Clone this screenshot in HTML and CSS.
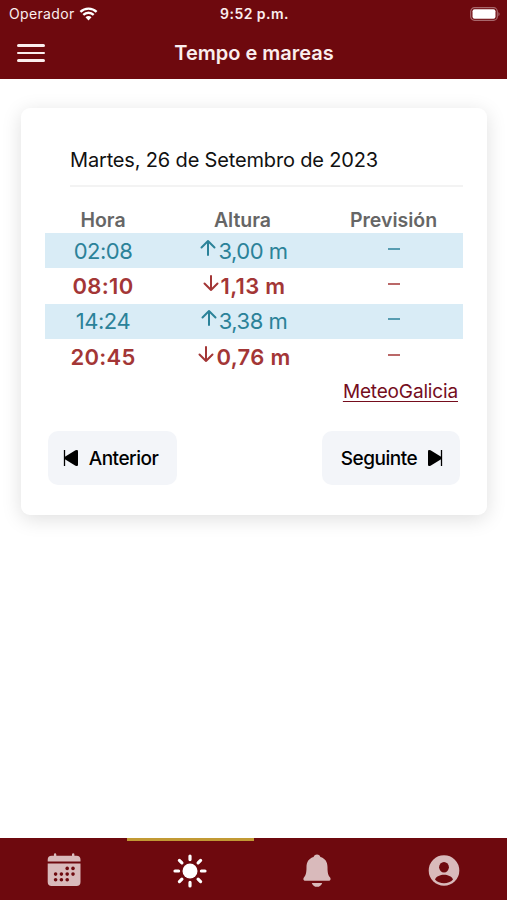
FILE: index.html
```html
<!DOCTYPE html>
<html lang="gl">

<head>
    <meta charset="UTF-8">
    <meta name="viewport" content="width=device-width, initial-scale=1.0">
    <title>Tempo e mareas</title>
    <link rel="stylesheet" href="styles.css">
</head>

<body>
    <header class="header">
        <div class="status">
            <div class="carrier">
                <span>Operador</span>
                <svg width="19" height="14" viewBox="0 0 18 14" fill="none" stroke="#fff" stroke-width="2.3">
                    <path d="M.9 4.9C5.4.4 12.6.4 17.1 4.9" />
                    <path d="M3.8 7.9C6.7 5 11.3 5 14.2 7.9" />
                    <path d="M6 10.2C7.7 8.6 10.3 8.6 12 10.2L9 13.4Z" fill="#fff" stroke="none" />
                </svg>
            </div>
            <span class="time">9:52 p.m.</span>
            <svg class="battery" width="30" height="14" viewBox="0 0 30 14">
                <rect x=".7" y=".7" width="26.6" height="12.6" rx="3.8" fill="none" stroke="#a8686c" stroke-width="1.2" />
                <rect x="2.5" y="2.3" width="23" height="9.4" rx="2" fill="#fff" />
                <path d="M28.4 5v4.200c1.600-.8 1.600-3.400 0-4.200z" fill="#a8686c" />
            </svg>
        </div>
        <div class="navbar">
            <div class="menu">
                <span></span>
                <span></span>
                <span></span>
            </div>
            <h1>Tempo e mareas</h1>
        </div>
    </header>

    <main>
        <div class="card">
            <h2>Martes, 26 de Setembro de 2023</h2>
            <!-- Tides -->
            <table>
                <thead>
                    <tr>
                        <th class="hour">Hora</th>
                        <th class="height">Altura</th>
                        <th>Previsión</th>
                    </tr>
                </thead>
                <tbody>
                    <tr class="high">
                        <td>02:08</td>
                        <td class="level"><svg class="arrow" viewBox="0 0 16 18"><path d="M8 16V2M1.500 8.500L8 2l6.500 6.500" /></svg>3,00 m</td>
                        <td><span class="dash"></span></td>
                    </tr>
                    <tr class="low">
                        <td>08:10</td>
                        <td class="level"><svg class="arrow" viewBox="0 0 16 18"><path d="M8 2v14M1.500 9.500L8 16l6.500-6.500" /></svg>1,13 m</td>
                        <td><span class="dash"></span></td>
                    </tr>
                    <tr class="high">
                        <td>14:24</td>
                        <td class="level"><svg class="arrow" viewBox="0 0 16 18"><path d="M8 16V2M1.500 8.500L8 2l6.500 6.500" /></svg>3,38 m</td>
                        <td><span class="dash"></span></td>
                    </tr>
                    <tr class="low">
                        <td>20:45</td>
                        <td class="level"><svg class="arrow wide" viewBox="0 0 16 18"><path d="M8 2v14M1.500 9.500L8 16l6.500-6.500" /></svg>0,76 m</td>
                        <td><span class="dash"></span></td>
                    </tr>
                </tbody>
            </table>
            <a class="source" href="#">MeteoGalicia</a>
            <div class="buttons">
                <button class="prev">
                    <svg width="16" height="18" viewBox="0 0 16 18"><path d="M1.500 1v16" stroke="#000" stroke-width="1.300" /><path d="M1.500 8L12.500 1.300q2.500-1 2.500 1v13.400q0 2-2.500 1L1.500 10z" /></svg>
                    <span>Anterior</span>
                </button>
                <button class="next">
                    <span>Seguinte</span>
                    <svg width="16" height="18" viewBox="0 0 16 18"><path d="M14.500 1v16" stroke="#000" stroke-width="1.300" /><path d="M14.500 8L3.500 1.300Q1 .3 1 2.300v13.400q0 2 2.500 1l11-6.700z" /></svg>
                </button>
            </div>
        </div>
    </main>

    <nav class="tabs">
        <a class="tab calendar" href="#">
            <svg width="34" height="34" viewBox="0 0 34 34">
                <path d="M.7 8.500V6.700Q.7 2.700 4.700 2.700H6.900V1.400a1.200 1.200 0 0 1 2.400 0v1.300H25V1.400a1.200 1.200 0 0 1 2.400 0v1.300h2.100q4 0 4 4v1.800zM.7 10.600h32.800v18.500q0 4-4 4H4.700q-4 0-4-4z" />
                <g fill="#6e090e">
                    <circle cx="20.200" cy="15.400" r="1.800" /><circle cx="26" cy="15.400" r="1.800" />
                    <circle cx="8.600" cy="21.100" r="1.800" /><circle cx="14.400" cy="21.100" r="1.800" /><circle cx="20.200" cy="21.100" r="1.800" /><circle cx="26" cy="21.100" r="1.800" />
                    <circle cx="8.600" cy="26.800" r="1.800" /><circle cx="14.400" cy="26.800" r="1.800" /><circle cx="20.200" cy="26.800" r="1.800" />
                </g>
            </svg>
        </a>
        <a class="tab active" href="#">
            <svg width="34" height="34" viewBox="0 0 34 34">
                <circle cx="17" cy="17" r="7.500" />
                <path d="M17 2v3.600M17 28.400V32M2 17h3.600M28.400 17H32M6.400 6.400l2.500 2.500M25.100 25.100l2.500 2.500M27.600 6.400l-2.500 2.500M8.900 25.100l-2.500 2.500" stroke="#fff" stroke-width="3.200" stroke-linecap="round" />
            </svg>
        </a>
        <a class="tab" href="#">
            <svg width="34" height="34" viewBox="0 0 34 34">
                <path d="M17 .4c-1.900 0-3 1.100-3.400 2.700C8.900 4.300 6.500 8.200 6.500 13c0 6.300-.8 8.200-2.400 10.200-1.200 1.500-1 3.600 1.500 3.600h22.800c2.500 0 2.700-2.100 1.500-3.600-1.600-2-2.400-3.900-2.400-10.200 0-4.800-2.400-8.700-7.100-9.900C20 1.500 18.900.4 17 .4zM11.800 28.900h10.400c-.6 2.400-2.700 3.900-5.200 3.900s-4.600-1.500-5.200-3.900z" />
            </svg>
        </a>
        <a class="tab" href="#">
            <svg width="34" height="34" viewBox="0 0 34 34">
                <circle cx="17" cy="16.500" r="15.300" />
                <g fill="#6e090e">
                    <ellipse cx="17" cy="13.300" rx="4.900" ry="5.300" />
                    <path d="M8 25.400c1.400-3 5.200-4.600 9-4.600s7.600 1.600 9 4.600c-2.200 2.500-5.500 3.800-9 3.800s-6.800-1.300-9-3.800z" />
                </g>
            </svg>
        </a>
    </nav>
</body>

</html>
```
FILE: styles.css
```css
* {
    box-sizing: border-box;
}

body {
    margin: 0;
    height: 100vh;
    display: flex;
    flex-direction: column;
    font-family: Inter, sans-serif;
    background-color: #fff;
    color: #111;
}

.header {
    height: 79px;
    background-color: #6e090e;
    color: #fbeeee;
}

.status {
    display: grid;
    grid-template-columns: 1fr auto 1fr;
    align-items: center;
    height: 27px;
    padding: 0 7px 0 9px;
    font-size: 14px;
}

.carrier {
    display: flex;
    align-items: center;
    gap: 4px;
    letter-spacing: 0.35px;
}

.time {
    font-weight: 600;
    letter-spacing: 0.45px;
}

.battery {
    justify-self: end;
}

.navbar {
    display: grid;
    grid-template-columns: 1fr auto 1fr;
    align-items: center;
    height: 51px;
    padding: 0 16px 0 17px;
}

.menu {
    display: flex;
    flex-direction: column;
    gap: 5px;
    padding-top: 1px;
}

.menu span {
    width: 28px;
    height: 2.500px;
    border-radius: 2px;
    background-color: #fbeeee;
}

h1 {
    margin: 0;
    font-size: 20px;
    font-weight: 600;
}

main {
    flex: 1;
    padding: 29px 20px 0 21px;
}

.card {
    display: flex;
    flex-direction: column;
    height: 407px;
    padding: 32px 24px 0;
    border-radius: 9px;
    background-color: #fff;
    box-shadow: 0 4px 20px rgba(0, 0, 0, 0.13);
}

h2 {
    margin: 0 0 0 25px;
    height: 47px;
    line-height: 40px;
    border-bottom: 2px solid #f3f3f3;
    font-size: 20px;
    font-weight: 400;
    letter-spacing: -0.16px;
}

table {
    width: 418px;
    margin-top: 20px;
    border-collapse: collapse;
    table-layout: fixed;
    text-align: center;
}

th {
    height: 26px;
    padding: 0;
    font-size: 19.500px;
    font-weight: 600;
    color: #666;
}

.hour {
    width: 116px;
}

.height {
    width: 163px;
}

td {
    height: 35.300px;
    padding: 0;
    font-size: 22px;
}

.high {
    background-color: #d9ecf6;
    color: #2b8299;
    letter-spacing: -0.5px;
}

.low {
    color: #a33636;
    font-weight: 600;
    letter-spacing: 0.3px;
}

.level {
    padding-left: 3px;
}

.arrow {
    width: 16px;
    height: 18px;
    margin-right: 2px;
    vertical-align: 2px;
    fill: none;
    stroke: currentColor;
    stroke-width: 2;
    stroke-linecap: round;
    stroke-linejoin: round;
}

.wide {
    margin-right: 3px;
}

.dash {
    display: inline-block;
    width: 12px;
    height: 2px;
    background-color: currentColor;
    opacity: 0.75;
    vertical-align: 9px;
}

.source {
    align-self: flex-end;
    margin: 6px 5px 0 0;
    line-height: 24px;
    font-size: 19px;
    letter-spacing: -0.15px;
    color: #750d1d;
    text-underline-offset: 3px;
    text-decoration-thickness: 1px;
}

.buttons {
    display: flex;
    justify-content: space-between;
    margin: 27px 3px 0;
}

button {
    display: flex;
    align-items: center;
    justify-content: center;
    gap: 10px;
    height: 54px;
    padding: 0;
    border: 0;
    border-radius: 10px;
    background-color: #f3f5f9;
    color: #000;
    font-family: inherit;
    font-size: 19px;
    font-weight: 500;
    letter-spacing: -0.5px;
}

.prev {
    width: 129px;
    padding-right: 4px;
}

.next {
    width: 138px;
    padding-left: 2px;
}

.tabs {
    display: flex;
    height: 62px;
    background-color: #6e090e;
}

.tab {
    flex: 1;
    display: flex;
    align-items: center;
    justify-content: center;
    border-top: 3px solid transparent;
    fill: #d9babb;
}

.calendar svg {
    margin: 0 -1px 2px 1px;
}

.active {
    border-top-color: #c29a34;
    fill: #fff;
}
```
